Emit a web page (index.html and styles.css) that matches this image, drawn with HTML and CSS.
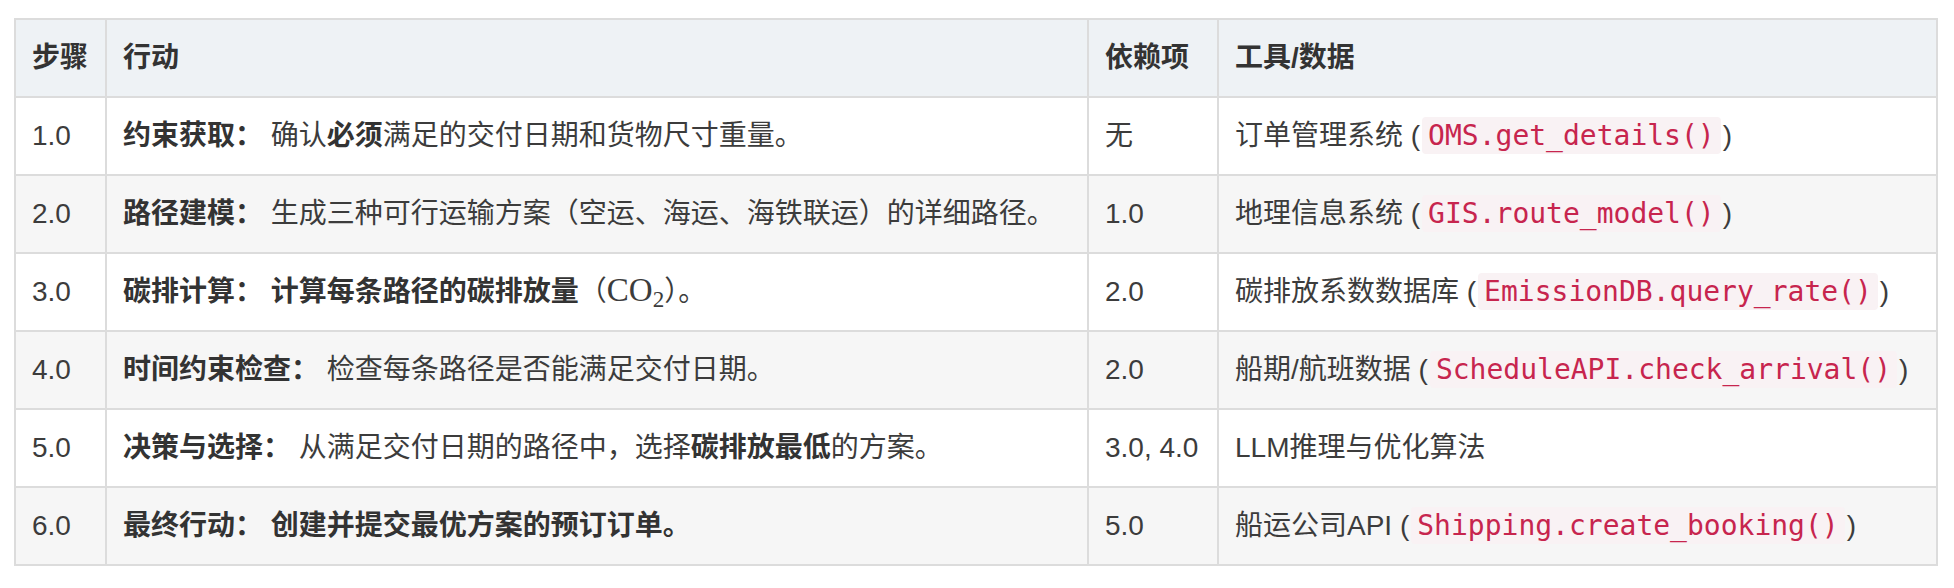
FILE: index.html
```html
<!DOCTYPE html>
<html lang="zh-CN">
<head>
<meta charset="utf-8">
<title>步骤表</title>
<link rel="stylesheet" href="styles.css">
</head>
<body>
<div class="page">
<table class="steps">
  <colgroup>
    <col class="c-step">
    <col class="c-action">
    <col class="c-dep">
    <col class="c-tool">
  </colgroup>
  <thead>
    <tr><th>步骤</th><th>行动</th><th>依赖项</th><th>工具/数据</th></tr>
  </thead>
  <tbody>
    <tr>
      <td>1.0</td>
      <td><strong>约束获取：</strong> 确认<strong>必须</strong>满足的交付日期和货物尺寸重量。</td>
      <td>无</td>
      <td>订单管理系统 (<code>OMS.get_details()</code>)</td>
    </tr>
    <tr>
      <td>2.0</td>
      <td><strong>路径建模：</strong> 生成三种可行运输方案（空运、海运、海铁联运）的详细路径。</td>
      <td>1.0</td>
      <td>地理信息系统 (<code>GIS.route_model()</code>)</td>
    </tr>
    <tr>
      <td>3.0</td>
      <td><strong>碳排计算：</strong> <strong>计算每条路径的碳排放量</strong>（<span class="math">CO<sub>2</sub></span>）。</td>
      <td>2.0</td>
      <td>碳排放系数数据库 (<code>EmissionDB.query_rate()</code>)</td>
    </tr>
    <tr>
      <td>4.0</td>
      <td><strong>时间约束检查：</strong> 检查每条路径是否能满足交付日期。</td>
      <td>2.0</td>
      <td>船期/航班数据 (<code>ScheduleAPI.check_arrival()</code>)</td>
    </tr>
    <tr>
      <td>5.0</td>
      <td><strong>决策与选择：</strong> 从满足交付日期的路径中，选择<strong>碳排放最低</strong>的方案。</td>
      <td>3.0, 4.0</td>
      <td>LLM推理与优化算法</td>
    </tr>
    <tr>
      <td>6.0</td>
      <td><strong>最终行动：</strong> <strong>创建并提交最优方案的预订订单。</strong></td>
      <td>5.0</td>
      <td>船运公司API (<code>Shipping.create_booking()</code>)</td>
    </tr>
  </tbody>
</table>
</div>
</body>
</html>
```

FILE: styles.css
```css
html, body {
  margin: 0;
  padding: 0;
  background: #ffffff;
}

.page {
  padding: 18px 16px 0 14px;
}

.steps {
  width: 1924px;
  table-layout: fixed;
  border-collapse: collapse;
  border: 2px solid #dcdcdc;
  font-family: "Liberation Sans", "Noto Sans CJK SC", sans-serif;
  font-size: 28px;
  color: #3c3c3c;
}

.c-step { width: 91px; }
.c-action { width: 982px; }
.c-dep { width: 130px; }
.c-tool { width: auto; }

.steps th,
.steps td {
  border: 2px solid #dcdcdc;
  padding: 17px 16px;
  line-height: 42px;
  height: 42px;
  text-align: left;
  vertical-align: middle;
  white-space: nowrap;
}

.steps th {
  background: #eef2f5;
  font-weight: bold;
  color: #333333;
}

.steps tbody tr:nth-child(odd) td {
  background: #ffffff;
}

.steps tbody tr:nth-child(even) td {
  background: #f6f6f6;
}

.steps strong {
  font-weight: bold;
  color: #333333;
}

.steps code {
  font-family: "DejaVu Sans Mono", monospace;
  font-size: 28px;
  color: #c7254e;
  background: #f9f2f4;
  padding: 2px 6px;
  border-radius: 4px;
  margin: 0 2px;
}

.math {
  font-family: "Liberation Serif", "DejaVu Serif", serif;
  font-size: 1.18em;
  line-height: 0;
  font-weight: normal;
}

.math sub {
  font-size: 0.7em;
  line-height: 0;
  vertical-align: -0.25em;
}
```
